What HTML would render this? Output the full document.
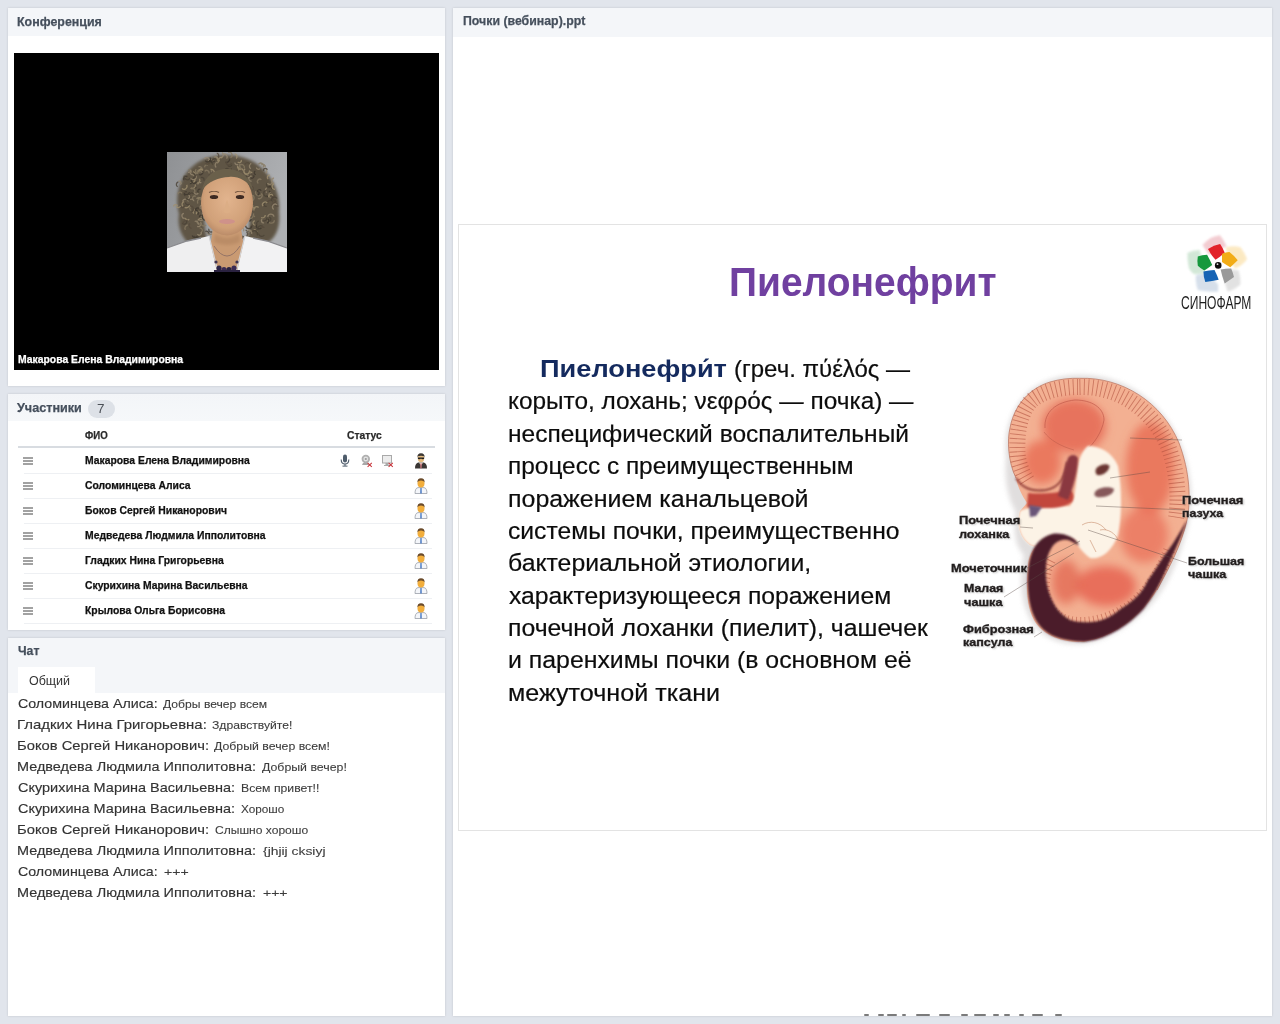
<!DOCTYPE html>
<html><head><meta charset="utf-8"><title>Вебинар</title>
<style>
html,body{margin:0;padding:0;width:1280px;height:1024px;overflow:hidden;background:#e1e5ec;font-family:"Liberation Sans", sans-serif;}
.tx{position:absolute;white-space:nowrap;font-family:"Liberation Sans", sans-serif;transform-origin:0 0;}
.panel{position:absolute;background:#fff;box-shadow:0 0 2px rgba(40,40,40,0.16);}
.ph{position:absolute;left:0;right:0;top:0;background:#f4f6f9;}
.row{position:absolute;left:16px;width:408px;height:1px;background:#eef0f3;}
.hb{position:absolute;left:23px;width:10px;height:2px;background:#a2a2a2;}
</style></head>
<body>
<!-- Conference panel -->
<div class="panel" style="left:8px;top:8px;width:437px;height:378px;">
  <div class="ph" style="height:28px;"></div>
  <div style="position:absolute;left:6px;top:45px;width:425px;height:317px;background:#000;"></div>
</div>
<!-- Participants panel -->
<div class="panel" style="left:8px;top:394px;width:437px;height:236px;">
  <div class="ph" style="height:27px;background:linear-gradient(#f3f5f8,#f6f8fa);"></div>
  <div style="position:absolute;left:80px;top:6px;width:27px;height:18px;border-radius:9px;background:#dde1e7;"></div>
  <div style="position:absolute;left:10px;top:52px;width:417px;height:2px;background:#d8dce1;"></div>
</div>
<!-- Chat panel -->
<div class="panel" style="left:8px;top:638px;width:437px;height:378px;">
  <div class="ph" style="height:55px;"></div>
  <div style="position:absolute;left:10px;top:29px;width:77px;height:26px;background:#fff;"></div>
</div>
<!-- Presentation panel -->
<div class="panel" style="left:453px;top:8px;width:819px;height:1008px;">
  <div class="ph" style="height:29px;"></div>
  <div style="position:absolute;left:5px;top:216px;width:807px;height:605px;border:1px solid #e3e3e3;background:#fff;"></div>
</div>
<div class='row' style='top:473px;left:24px;width:408px'></div><div class='hb' style='top:456.5px'></div><div class='hb' style='top:459.5px'></div><div class='hb' style='top:462.5px'></div><div class='row' style='top:498px;left:24px;width:408px'></div><div class='hb' style='top:481.5px'></div><div class='hb' style='top:484.5px'></div><div class='hb' style='top:487.5px'></div><div class='row' style='top:523px;left:24px;width:408px'></div><div class='hb' style='top:506.5px'></div><div class='hb' style='top:509.5px'></div><div class='hb' style='top:512.5px'></div><div class='row' style='top:548px;left:24px;width:408px'></div><div class='hb' style='top:531.5px'></div><div class='hb' style='top:534.5px'></div><div class='hb' style='top:537.5px'></div><div class='row' style='top:573px;left:24px;width:408px'></div><div class='hb' style='top:556.5px'></div><div class='hb' style='top:559.5px'></div><div class='hb' style='top:562.5px'></div><div class='row' style='top:598px;left:24px;width:408px'></div><div class='hb' style='top:581.5px'></div><div class='hb' style='top:584.5px'></div><div class='hb' style='top:587.5px'></div><div class='row' style='top:623px;left:24px;width:408px'></div><div class='hb' style='top:606.5px'></div><div class='hb' style='top:609.5px'></div><div class='hb' style='top:612.5px'></div>
<div style='position:absolute;left:864px;top:1014px;width:5.0px;height:2px;background:#5a5a5a;opacity:0.8;border-radius:1px'></div><div style='position:absolute;left:877.5px;top:1014px;width:6.5px;height:2px;background:#5a5a5a;opacity:0.8;border-radius:1px'></div><div style='position:absolute;left:887px;top:1014px;width:10.0px;height:2px;background:#5a5a5a;opacity:0.8;border-radius:1px'></div><div style='position:absolute;left:901.6px;top:1014px;width:4.4px;height:2px;background:#5a5a5a;opacity:0.8;border-radius:1px'></div><div style='position:absolute;left:915.6px;top:1014px;width:14.1px;height:2px;background:#5a5a5a;opacity:0.8;border-radius:1px'></div><div style='position:absolute;left:939px;top:1014px;width:10.6px;height:2px;background:#5a5a5a;opacity:0.8;border-radius:1px'></div><div style='position:absolute;left:961.4px;top:1014px;width:7.0px;height:2px;background:#5a5a5a;opacity:0.8;border-radius:1px'></div><div style='position:absolute;left:974px;top:1014px;width:12.0px;height:2px;background:#5a5a5a;opacity:0.8;border-radius:1px'></div><div style='position:absolute;left:992.8px;top:1014px;width:6.3px;height:2px;background:#5a5a5a;opacity:0.8;border-radius:1px'></div><div style='position:absolute;left:1004px;top:1014px;width:5.7px;height:2px;background:#5a5a5a;opacity:0.8;border-radius:1px'></div><div style='position:absolute;left:1018.8px;top:1014px;width:5.7px;height:2px;background:#5a5a5a;opacity:0.8;border-radius:1px'></div><div style='position:absolute;left:1031.5px;top:1014px;width:11.9px;height:2px;background:#5a5a5a;opacity:0.8;border-radius:1px'></div><div style='position:absolute;left:1055.4px;top:1014px;width:7.0px;height:2px;background:#5a5a5a;opacity:0.8;border-radius:1px'></div>
<!-- portrait -->
<svg style="position:absolute;left:167px;top:152px" width="120" height="120" viewBox="0 0 120 120">
  <defs>
    <linearGradient id="pbg" x1="0" y1="0" x2="1" y2="0.3"><stop offset="0" stop-color="#8f9194"/><stop offset="1" stop-color="#aeb0b3"/></linearGradient>
    <radialGradient id="pface" cx="0.5" cy="0.45" r="0.62"><stop offset="0" stop-color="#e2b48e"/><stop offset="0.7" stop-color="#d0a078"/><stop offset="1" stop-color="#ae8060"/></radialGradient>
    <filter id="pbl" x="-10%" y="-10%" width="120%" height="120%"><feGaussianBlur stdDeviation="1.6"/></filter>
    <filter id="pbl2" x="-10%" y="-10%" width="120%" height="120%"><feGaussianBlur stdDeviation="0.7"/></filter>
    <filter id="pbl3" x="-10%" y="-10%" width="120%" height="120%"><feGaussianBlur stdDeviation="0.45"/></filter>
  </defs>
  <rect width="120" height="120" fill="url(#pbg)"/>
  <g filter="url(#pbl)">
    <path d="M12 62 C6 40 16 14 40 6 C56 1 76 2 90 12 C106 24 114 42 112 60 C114 76 108 88 98 92 L78 92 C84 78 84 58 80 36 C70 24 50 24 40 36 C36 58 36 78 42 92 L22 92 C14 84 10 74 12 62Z" fill="#5e5444"/>
  </g>
  <g filter="url(#pbl2)" opacity="0.8"><path d="M103.7 44.5A2.5 2.5 0 0 1 108.2 45.0" stroke="#554a3c" stroke-width="1.3" fill="none"/><path d="M73.8 21.4A2.4 2.4 0 0 1 70.3 18.1" stroke="#554a3c" stroke-width="1.3" fill="none"/><path d="M70.7 16.5A1.8 1.8 0 0 1 73.7 15.4" stroke="#968870" stroke-width="1.3" fill="none"/><path d="M29.3 24.0A2.2 2.2 0 0 1 25.9 25.8" stroke="#3e372e" stroke-width="1.3" fill="none"/><path d="M97.0 70.8A2.2 2.2 0 0 1 95.1 67.0" stroke="#968870" stroke-width="1.3" fill="none"/><path d="M49.4 6.2A2.7 2.7 0 0 1 50.3 11.2" stroke="#a09070" stroke-width="1.3" fill="none"/><path d="M82.2 19.5A2.5 2.5 0 0 1 77.2 19.7" stroke="#a09070" stroke-width="1.3" fill="none"/><path d="M18.3 43.6A2.1 2.1 0 0 1 19.7 39.7" stroke="#3e372e" stroke-width="1.3" fill="none"/><path d="M55.0 0.6A2.7 2.7 0 0 1 53.7 5.6" stroke="#968870" stroke-width="1.3" fill="none"/><path d="M67.1 26.7A2.6 2.6 0 0 1 69.8 22.4" stroke="#3e372e" stroke-width="1.3" fill="none"/><path d="M94.3 13.1A2.3 2.3 0 0 1 98.2 15.1" stroke="#877a62" stroke-width="1.3" fill="none"/><path d="M35.6 18.8A2.8 2.8 0 0 1 31.9 22.5" stroke="#3e372e" stroke-width="1.3" fill="none"/><path d="M79.7 24.5A3.0 3.0 0 0 1 85.0 26.0" stroke="#877a62" stroke-width="1.3" fill="none"/><path d="M74.3 7.9A2.1 2.1 0 0 1 70.7 9.9" stroke="#a09070" stroke-width="1.3" fill="none"/><path d="M52.7 9.2A2.0 2.0 0 0 1 55.2 5.9" stroke="#a09070" stroke-width="1.3" fill="none"/><path d="M20.7 42.1A2.3 2.3 0 0 1 21.9 46.4" stroke="#554a3c" stroke-width="1.3" fill="none"/><path d="M107.4 68.3A3.1 3.1 0 0 1 101.2 67.9" stroke="#877a62" stroke-width="1.3" fill="none"/><path d="M37.8 15.4A1.9 1.9 0 0 1 40.9 13.4" stroke="#877a62" stroke-width="1.3" fill="none"/><path d="M83.9 16.8A3.1 3.1 0 0 1 84.3 11.3" stroke="#968870" stroke-width="1.3" fill="none"/><path d="M102.0 39.0A2.9 2.9 0 0 1 98.7 43.8" stroke="#3e372e" stroke-width="1.3" fill="none"/><path d="M17.3 28.3A2.4 2.4 0 0 1 20.3 24.6" stroke="#3e372e" stroke-width="1.3" fill="none"/><path d="M55.2 23.7A2.8 2.8 0 0 1 60.7 23.2" stroke="#3e372e" stroke-width="1.3" fill="none"/><path d="M101.3 35.3A2.0 2.0 0 0 1 104.7 37.3" stroke="#3e372e" stroke-width="1.3" fill="none"/><path d="M103.2 35.3A2.7 2.7 0 0 1 100.4 30.8" stroke="#4a4236" stroke-width="1.3" fill="none"/><path d="M100.0 40.5A2.6 2.6 0 0 1 99.8 35.8" stroke="#968870" stroke-width="1.3" fill="none"/><path d="M35.5 20.3A2.4 2.4 0 0 1 34.4 15.9" stroke="#877a62" stroke-width="1.3" fill="none"/><path d="M82.2 83.6A2.7 2.7 0 0 1 84.9 79.0" stroke="#877a62" stroke-width="1.3" fill="none"/><path d="M21.6 43.1A1.8 1.8 0 0 1 21.1 46.5" stroke="#968870" stroke-width="1.3" fill="none"/><path d="M15.9 54.3A2.7 2.7 0 0 1 17.1 49.7" stroke="#a09070" stroke-width="1.3" fill="none"/><path d="M30.9 68.5A2.9 2.9 0 0 1 35.5 67.0" stroke="#a09070" stroke-width="1.3" fill="none"/><path d="M83.4 21.6A2.4 2.4 0 0 1 80.7 25.3" stroke="#968870" stroke-width="1.3" fill="none"/><path d="M108.7 48.2A2.7 2.7 0 0 1 107.3 43.0" stroke="#554a3c" stroke-width="1.3" fill="none"/><path d="M31.5 40.5A1.9 1.9 0 0 1 33.5 37.3" stroke="#3e372e" stroke-width="1.3" fill="none"/><path d="M41.3 9.0A2.4 2.4 0 0 1 45.9 10.7" stroke="#968870" stroke-width="1.3" fill="none"/><path d="M31.9 84.1A2.4 2.4 0 0 1 27.2 83.7" stroke="#4a4236" stroke-width="1.3" fill="none"/><path d="M100.7 51.7A2.7 2.7 0 0 1 106.0 50.4" stroke="#554a3c" stroke-width="1.3" fill="none"/><path d="M61.1 27.1A2.8 2.8 0 0 1 65.3 30.8" stroke="#554a3c" stroke-width="1.3" fill="none"/><path d="M35.9 62.8A3.1 3.1 0 0 1 32.0 67.7" stroke="#968870" stroke-width="1.3" fill="none"/><path d="M111.4 53.8A2.6 2.6 0 0 1 109.1 49.1" stroke="#554a3c" stroke-width="1.3" fill="none"/><path d="M90.3 40.1A2.1 2.1 0 0 1 94.2 38.7" stroke="#3e372e" stroke-width="1.3" fill="none"/><path d="M65.0 12.6A2.4 2.4 0 0 1 60.7 13.4" stroke="#4a4236" stroke-width="1.3" fill="none"/><path d="M81.7 25.0A2.5 2.5 0 0 1 86.6 24.5" stroke="#554a3c" stroke-width="1.3" fill="none"/><path d="M30.7 21.6A2.5 2.5 0 0 1 34.6 18.5" stroke="#877a62" stroke-width="1.3" fill="none"/><path d="M99.7 54.3A2.1 2.1 0 0 1 98.3 50.3" stroke="#4a4236" stroke-width="1.3" fill="none"/><path d="M33.5 69.9A2.9 2.9 0 0 1 30.2 74.4" stroke="#968870" stroke-width="1.3" fill="none"/><path d="M33.6 71.5A2.2 2.2 0 0 1 30.3 68.7" stroke="#877a62" stroke-width="1.3" fill="none"/><path d="M22.4 40.2A2.8 2.8 0 0 1 17.5 41.7" stroke="#3e372e" stroke-width="1.3" fill="none"/><path d="M15.6 49.5A2.9 2.9 0 0 1 21.3 49.5" stroke="#968870" stroke-width="1.3" fill="none"/><path d="M55.9 2.4A2.9 2.9 0 0 1 59.6 6.7" stroke="#968870" stroke-width="1.3" fill="none"/><path d="M28.9 21.0A3.0 3.0 0 0 1 23.1 20.3" stroke="#968870" stroke-width="1.3" fill="none"/><path d="M22.1 67.1A1.9 1.9 0 0 1 18.6 65.8" stroke="#a09070" stroke-width="1.3" fill="none"/><path d="M97.0 16.6A2.4 2.4 0 0 1 98.5 21.1" stroke="#968870" stroke-width="1.3" fill="none"/><path d="M43.1 7.9A3.0 3.0 0 0 1 38.3 11.3" stroke="#554a3c" stroke-width="1.3" fill="none"/><path d="M84.0 76.8A2.9 2.9 0 0 1 89.2 74.3" stroke="#554a3c" stroke-width="1.3" fill="none"/><path d="M26.2 19.5A2.1 2.1 0 0 1 26.3 23.4" stroke="#a09070" stroke-width="1.3" fill="none"/><path d="M31.2 41.1A2.1 2.1 0 0 1 27.3 39.8" stroke="#968870" stroke-width="1.3" fill="none"/><path d="M84.9 74.1A3.2 3.2 0 0 1 78.6 73.6" stroke="#3e372e" stroke-width="1.3" fill="none"/><path d="M88.1 64.7A1.8 1.8 0 0 1 87.1 61.5" stroke="#877a62" stroke-width="1.3" fill="none"/><path d="M73.3 77.0A1.9 1.9 0 0 1 76.4 79.3" stroke="#968870" stroke-width="1.3" fill="none"/><path d="M96.0 54.1A2.6 2.6 0 0 1 100.3 51.1" stroke="#a09070" stroke-width="1.3" fill="none"/><path d="M36.3 66.1A2.6 2.6 0 0 1 37.4 61.1" stroke="#968870" stroke-width="1.3" fill="none"/><path d="M87.2 58.5A2.7 2.7 0 0 1 91.6 55.5" stroke="#a09070" stroke-width="1.3" fill="none"/><path d="M85.3 43.1A3.2 3.2 0 0 1 83.3 49.1" stroke="#877a62" stroke-width="1.3" fill="none"/><path d="M49.2 15.4A3.0 3.0 0 0 1 50.4 10.2" stroke="#968870" stroke-width="1.3" fill="none"/><path d="M34.7 54.4A2.4 2.4 0 0 1 34.6 59.1" stroke="#3e372e" stroke-width="1.3" fill="none"/><path d="M86.8 23.2A2.0 2.0 0 0 1 83.6 25.5" stroke="#3e372e" stroke-width="1.3" fill="none"/><path d="M34.8 56.6A2.8 2.8 0 0 1 38.3 60.5" stroke="#968870" stroke-width="1.3" fill="none"/><path d="M29.2 23.8A3.2 3.2 0 0 1 23.4 26.2" stroke="#968870" stroke-width="1.3" fill="none"/><path d="M32.5 26.7A2.9 2.9 0 0 1 29.6 31.0" stroke="#a09070" stroke-width="1.3" fill="none"/><path d="M94.2 41.5A3.0 3.0 0 0 1 90.9 46.4" stroke="#877a62" stroke-width="1.3" fill="none"/><path d="M32.6 76.2A2.3 2.3 0 0 1 34.3 80.4" stroke="#877a62" stroke-width="1.3" fill="none"/><path d="M86.8 78.0A2.1 2.1 0 0 1 89.5 81.1" stroke="#a09070" stroke-width="1.3" fill="none"/><path d="M82.6 31.4A2.9 2.9 0 0 1 77.3 31.0" stroke="#4a4236" stroke-width="1.3" fill="none"/><path d="M79.7 51.0A2.9 2.9 0 0 1 83.0 46.4" stroke="#877a62" stroke-width="1.3" fill="none"/><path d="M83.9 34.5A2.0 2.0 0 0 1 85.3 38.2" stroke="#554a3c" stroke-width="1.3" fill="none"/><path d="M103.7 45.9A2.9 2.9 0 0 1 103.8 40.4" stroke="#877a62" stroke-width="1.3" fill="none"/><path d="M101.1 27.1A2.3 2.3 0 0 1 103.0 23.1" stroke="#a09070" stroke-width="1.3" fill="none"/><path d="M90.2 72.9A2.3 2.3 0 0 1 92.0 69.1" stroke="#4a4236" stroke-width="1.3" fill="none"/><path d="M24.5 76.3A3.0 3.0 0 0 1 22.7 71.5" stroke="#554a3c" stroke-width="1.3" fill="none"/><path d="M24.1 28.3A1.8 1.8 0 0 1 22.9 31.6" stroke="#3e372e" stroke-width="1.3" fill="none"/><path d="M72.8 13.2A2.8 2.8 0 0 1 77.3 16.1" stroke="#877a62" stroke-width="1.3" fill="none"/><path d="M45.3 79.6A2.3 2.3 0 0 1 41.9 76.8" stroke="#4a4236" stroke-width="1.3" fill="none"/><path d="M79.5 79.7A2.9 2.9 0 0 1 75.9 84.3" stroke="#554a3c" stroke-width="1.3" fill="none"/><path d="M31.5 14.8A2.7 2.7 0 0 1 34.9 18.6" stroke="#877a62" stroke-width="1.3" fill="none"/><path d="M11.2 29.4A2.0 2.0 0 0 1 13.4 32.7" stroke="#968870" stroke-width="1.3" fill="none"/><path d="M37.8 19.4A2.3 2.3 0 0 1 41.9 21.4" stroke="#877a62" stroke-width="1.3" fill="none"/><path d="M31.2 21.3A2.2 2.2 0 0 1 29.3 17.4" stroke="#877a62" stroke-width="1.3" fill="none"/><path d="M104.8 54.0A3.0 3.0 0 0 1 110.2 52.1" stroke="#554a3c" stroke-width="1.3" fill="none"/><path d="M59.9 22.2A1.9 1.9 0 0 1 56.3 23.1" stroke="#877a62" stroke-width="1.3" fill="none"/><path d="M94.5 75.8A2.9 2.9 0 0 1 89.6 72.9" stroke="#3e372e" stroke-width="1.3" fill="none"/><path d="M101.9 45.3A2.1 2.1 0 0 1 105.9 43.8" stroke="#a09070" stroke-width="1.3" fill="none"/><path d="M91.4 12.4A2.8 2.8 0 0 1 96.1 15.5" stroke="#877a62" stroke-width="1.3" fill="none"/><path d="M97.3 83.0A3.0 3.0 0 0 1 91.8 82.1" stroke="#4a4236" stroke-width="1.3" fill="none"/><path d="M102.1 65.3A1.9 1.9 0 0 1 102.6 69.0" stroke="#4a4236" stroke-width="1.3" fill="none"/><path d="M93.8 42.9A3.1 3.1 0 0 1 89.0 39.1" stroke="#877a62" stroke-width="1.3" fill="none"/><path d="M42.7 40.1A2.6 2.6 0 0 1 37.6 40.3" stroke="#968870" stroke-width="1.3" fill="none"/><path d="M77.9 12.5A2.4 2.4 0 0 1 82.5 12.3" stroke="#554a3c" stroke-width="1.3" fill="none"/><path d="M84.5 48.1A2.2 2.2 0 0 1 81.3 45.1" stroke="#554a3c" stroke-width="1.3" fill="none"/><path d="M26.8 61.5A2.2 2.2 0 0 1 29.4 58.0" stroke="#a09070" stroke-width="1.3" fill="none"/><path d="M88.3 56.0A1.9 1.9 0 0 1 86.0 53.1" stroke="#a09070" stroke-width="1.3" fill="none"/><path d="M106.7 57.4A2.8 2.8 0 0 1 109.9 52.7" stroke="#968870" stroke-width="1.3" fill="none"/><path d="M74.3 16.8A2.7 2.7 0 0 1 70.6 13.6" stroke="#a09070" stroke-width="1.3" fill="none"/><path d="M71.2 12.2A2.1 2.1 0 0 1 67.9 10.4" stroke="#968870" stroke-width="1.3" fill="none"/><path d="M44.9 81.8A3.1 3.1 0 0 1 39.8 79.2" stroke="#877a62" stroke-width="1.3" fill="none"/><path d="M49.8 1.2A2.4 2.4 0 0 1 50.2 5.8" stroke="#554a3c" stroke-width="1.3" fill="none"/><path d="M32.1 20.5A2.2 2.2 0 0 1 36.0 18.4" stroke="#a09070" stroke-width="1.3" fill="none"/><path d="M92.6 81.8A2.7 2.7 0 0 1 89.9 77.2" stroke="#554a3c" stroke-width="1.3" fill="none"/><path d="M29.0 58.4A2.5 2.5 0 0 1 33.6 58.6" stroke="#554a3c" stroke-width="1.3" fill="none"/><path d="M67.7 1.8A2.7 2.7 0 0 1 69.1 6.5" stroke="#a09070" stroke-width="1.3" fill="none"/><path d="M79.3 35.3A3.1 3.1 0 0 1 82.2 30.0" stroke="#877a62" stroke-width="1.3" fill="none"/><path d="M69.6 26.7A3.1 3.1 0 0 1 63.5 26.5" stroke="#4a4236" stroke-width="1.3" fill="none"/><path d="M78.1 38.4A2.9 2.9 0 0 1 79.5 33.4" stroke="#4a4236" stroke-width="1.3" fill="none"/><path d="M85.4 79.6A3.1 3.1 0 0 1 90.2 83.4" stroke="#4a4236" stroke-width="1.3" fill="none"/><path d="M26.0 47.3A2.0 2.0 0 0 1 28.7 44.4" stroke="#877a62" stroke-width="1.3" fill="none"/><path d="M23.1 26.0A3.1 3.1 0 0 1 17.4 23.6" stroke="#4a4236" stroke-width="1.3" fill="none"/><path d="M19.7 32.9A3.1 3.1 0 0 1 14.9 36.6" stroke="#a09070" stroke-width="1.3" fill="none"/><path d="M42.9 5.5A2.8 2.8 0 0 1 38.3 8.7" stroke="#3e372e" stroke-width="1.3" fill="none"/><path d="M33.9 79.8A2.1 2.1 0 0 1 30.4 82.2" stroke="#968870" stroke-width="1.3" fill="none"/><path d="M61.1 25.8A2.2 2.2 0 0 1 63.2 22.3" stroke="#877a62" stroke-width="1.3" fill="none"/><path d="M100.1 44.5A2.9 2.9 0 0 1 99.2 38.7" stroke="#4a4236" stroke-width="1.3" fill="none"/><path d="M22.5 52.5A3.1 3.1 0 0 1 17.1 54.7" stroke="#a09070" stroke-width="1.3" fill="none"/><path d="M22.2 43.0A2.4 2.4 0 0 1 26.4 41.8" stroke="#4a4236" stroke-width="1.3" fill="none"/><path d="M105.3 29.9A2.5 2.5 0 0 1 100.5 30.9" stroke="#968870" stroke-width="1.3" fill="none"/><path d="M30.5 83.7A2.8 2.8 0 0 1 25.2 83.5" stroke="#3e372e" stroke-width="1.3" fill="none"/><path d="M81.6 57.2A2.5 2.5 0 0 1 82.1 52.2" stroke="#554a3c" stroke-width="1.3" fill="none"/><path d="M19.3 68.9A2.2 2.2 0 0 1 15.4 71.0" stroke="#4a4236" stroke-width="1.3" fill="none"/><path d="M91.4 39.5A2.0 2.0 0 0 1 90.6 43.0" stroke="#3e372e" stroke-width="1.3" fill="none"/><path d="M26.2 21.5A2.7 2.7 0 0 1 26.3 26.7" stroke="#4a4236" stroke-width="1.3" fill="none"/><path d="M71.7 22.5A2.2 2.2 0 0 1 67.8 24.7" stroke="#877a62" stroke-width="1.3" fill="none"/><path d="M68.6 20.4A3.2 3.2 0 0 1 64.4 16.4" stroke="#4a4236" stroke-width="1.3" fill="none"/><path d="M58.4 16.9A2.6 2.6 0 0 1 62.4 19.8" stroke="#4a4236" stroke-width="1.3" fill="none"/><path d="M99.7 65.6A2.5 2.5 0 0 1 96.3 68.6" stroke="#4a4236" stroke-width="1.3" fill="none"/><path d="M15.5 42.1A2.7 2.7 0 0 1 20.6 41.8" stroke="#554a3c" stroke-width="1.3" fill="none"/><path d="M29.6 47.0A2.1 2.1 0 0 1 33.6 48.3" stroke="#877a62" stroke-width="1.3" fill="none"/><path d="M82.3 61.4A1.9 1.9 0 0 1 85.6 59.7" stroke="#554a3c" stroke-width="1.3" fill="none"/><path d="M65.0 28.3A2.6 2.6 0 0 1 60.8 25.1" stroke="#a09070" stroke-width="1.3" fill="none"/><path d="M30.6 47.2A2.7 2.7 0 0 1 35.5 49.2" stroke="#a09070" stroke-width="1.3" fill="none"/><path d="M48.4 23.2A3.2 3.2 0 0 1 42.2 22.6" stroke="#4a4236" stroke-width="1.3" fill="none"/><path d="M24.4 45.5A2.8 2.8 0 0 1 19.1 46.2" stroke="#4a4236" stroke-width="1.3" fill="none"/><path d="M18.1 53.3A2.5 2.5 0 0 1 13.4 54.3" stroke="#554a3c" stroke-width="1.3" fill="none"/><path d="M88.4 73.1A2.1 2.1 0 0 1 87.9 68.9" stroke="#a09070" stroke-width="1.3" fill="none"/><path d="M23.1 53.8A3.2 3.2 0 0 1 24.3 60.0" stroke="#554a3c" stroke-width="1.3" fill="none"/><path d="M27.4 38.5A1.9 1.9 0 0 1 29.6 35.8" stroke="#4a4236" stroke-width="1.3" fill="none"/><path d="M71.3 18.4A2.5 2.5 0 0 1 76.1 18.5" stroke="#a09070" stroke-width="1.3" fill="none"/><path d="M45.9 29.5A1.8 1.8 0 0 1 43.5 27.1" stroke="#877a62" stroke-width="1.3" fill="none"/><path d="M84.6 29.1A2.3 2.3 0 0 1 82.7 25.0" stroke="#968870" stroke-width="1.3" fill="none"/><path d="M46.1 12.5A3.0 3.0 0 0 1 49.1 7.3" stroke="#4a4236" stroke-width="1.3" fill="none"/><path d="M39.6 61.4A2.5 2.5 0 0 1 37.0 57.3" stroke="#968870" stroke-width="1.3" fill="none"/><path d="M41.4 43.8A2.6 2.6 0 0 1 38.0 39.9" stroke="#877a62" stroke-width="1.3" fill="none"/><path d="M22.6 52.0A2.3 2.3 0 0 1 18.5 50.4" stroke="#4a4236" stroke-width="1.3" fill="none"/><path d="M38.8 68.0A3.1 3.1 0 0 1 37.4 62.0" stroke="#3e372e" stroke-width="1.3" fill="none"/><path d="M29.6 62.3A1.9 1.9 0 0 1 32.4 59.9" stroke="#a09070" stroke-width="1.3" fill="none"/><path d="M107.0 31.5A2.8 2.8 0 0 1 107.0 26.0" stroke="#968870" stroke-width="1.3" fill="none"/><path d="M56.6 29.0A3.0 3.0 0 0 1 59.6 23.8" stroke="#4a4236" stroke-width="1.3" fill="none"/><path d="M47.6 8.7A2.4 2.4 0 0 1 43.0 7.9" stroke="#3e372e" stroke-width="1.3" fill="none"/><path d="M85.5 85.7A1.9 1.9 0 0 1 81.9 86.0" stroke="#a09070" stroke-width="1.3" fill="none"/><path d="M32.3 65.2A2.1 2.1 0 0 1 36.2 64.1" stroke="#3e372e" stroke-width="1.3" fill="none"/><path d="M13.6 54.1A2.7 2.7 0 0 1 9.0 54.6" stroke="#a09070" stroke-width="1.3" fill="none"/><path d="M21.3 18.2A2.1 2.1 0 0 1 24.2 20.8" stroke="#877a62" stroke-width="1.3" fill="none"/><path d="M82.4 78.2A2.2 2.2 0 0 1 78.7 77.8" stroke="#4a4236" stroke-width="1.3" fill="none"/><path d="M82.5 63.7A3.1 3.1 0 0 1 82.4 69.4" stroke="#3e372e" stroke-width="1.3" fill="none"/><path d="M91.3 31.4A2.4 2.4 0 0 1 94.4 27.7" stroke="#877a62" stroke-width="1.3" fill="none"/><path d="M30.9 32.4A2.0 2.0 0 0 1 34.3 31.0" stroke="#968870" stroke-width="1.3" fill="none"/><path d="M38.4 79.5A2.5 2.5 0 0 1 42.0 81.9" stroke="#3e372e" stroke-width="1.3" fill="none"/><path d="M31.1 51.5A2.9 2.9 0 0 1 35.7 47.9" stroke="#877a62" stroke-width="1.3" fill="none"/><path d="M80.6 22.1A3.0 3.0 0 0 1 78.2 16.7" stroke="#a09070" stroke-width="1.3" fill="none"/><path d="M74.9 16.6A2.8 2.8 0 0 1 73.3 11.8" stroke="#877a62" stroke-width="1.3" fill="none"/><path d="M80.3 23.9A2.1 2.1 0 0 1 76.2 24.0" stroke="#4a4236" stroke-width="1.3" fill="none"/><path d="M33.9 25.6A2.2 2.2 0 0 1 36.8 28.6" stroke="#4a4236" stroke-width="1.3" fill="none"/><path d="M39.2 72.9A3.2 3.2 0 0 1 33.7 70.3" stroke="#877a62" stroke-width="1.3" fill="none"/><path d="M96.6 18.8A1.9 1.9 0 0 1 100.3 17.8" stroke="#4a4236" stroke-width="1.3" fill="none"/><path d="M23.6 17.7A1.9 1.9 0 0 1 21.1 20.2" stroke="#968870" stroke-width="1.3" fill="none"/><path d="M33.4 56.8A2.2 2.2 0 0 1 35.9 53.4" stroke="#968870" stroke-width="1.3" fill="none"/><path d="M47.2 27.1A1.9 1.9 0 0 1 44.1 25.2" stroke="#968870" stroke-width="1.3" fill="none"/><path d="M18.4 77.9A3.2 3.2 0 0 1 20.8 73.0" stroke="#877a62" stroke-width="1.3" fill="none"/><path d="M47.3 5.3A2.6 2.6 0 0 1 50.5 9.3" stroke="#a09070" stroke-width="1.3" fill="none"/><path d="M85.2 20.1A1.8 1.8 0 0 1 82.5 18.3" stroke="#a09070" stroke-width="1.3" fill="none"/><path d="M6.7 54.6A1.9 1.9 0 0 1 10.5 54.4" stroke="#a09070" stroke-width="1.3" fill="none"/><path d="M91.2 78.1A2.8 2.8 0 0 1 96.0 75.1" stroke="#4a4236" stroke-width="1.3" fill="none"/><path d="M104.6 48.9A3.0 3.0 0 0 1 110.0 46.5" stroke="#4a4236" stroke-width="1.3" fill="none"/><path d="M66.7 25.1A2.3 2.3 0 0 1 69.7 21.5" stroke="#3e372e" stroke-width="1.3" fill="none"/><path d="M37.5 6.8A2.7 2.7 0 0 1 42.4 7.9" stroke="#968870" stroke-width="1.3" fill="none"/><path d="M27.7 69.5A2.6 2.6 0 0 1 31.3 72.6" stroke="#968870" stroke-width="1.3" fill="none"/><path d="M44.8 20.2A1.8 1.8 0 0 1 46.0 17.3" stroke="#877a62" stroke-width="1.3" fill="none"/><path d="M97.5 75.2A1.8 1.8 0 0 1 94.9 73.5" stroke="#554a3c" stroke-width="1.3" fill="none"/><path d="M27.8 26.8A2.7 2.7 0 0 1 23.6 29.9" stroke="#a09070" stroke-width="1.3" fill="none"/><path d="M61.2 0.5A2.8 2.8 0 0 1 63.4 5.7" stroke="#877a62" stroke-width="1.3" fill="none"/><path d="M70.5 83.3A3.0 3.0 0 0 1 75.2 86.8" stroke="#4a4236" stroke-width="1.3" fill="none"/><path d="M16.5 72.5A2.8 2.8 0 0 1 21.1 69.4" stroke="#554a3c" stroke-width="1.3" fill="none"/><path d="M28.3 58.2A2.6 2.6 0 0 1 32.3 56.3" stroke="#3e372e" stroke-width="1.3" fill="none"/><path d="M10.7 34.8A2.6 2.6 0 0 1 11.3 30.0" stroke="#4a4236" stroke-width="1.3" fill="none"/><path d="M51.4 83.4A2.0 2.0 0 0 1 47.6 84.3" stroke="#877a62" stroke-width="1.3" fill="none"/><path d="M92.9 16.6A2.0 2.0 0 0 1 89.4 15.5" stroke="#968870" stroke-width="1.3" fill="none"/><path d="M100.7 66.9A2.2 2.2 0 0 1 100.1 71.0" stroke="#3e372e" stroke-width="1.3" fill="none"/><path d="M29.6 29.5A2.7 2.7 0 0 1 24.5 27.7" stroke="#3e372e" stroke-width="1.3" fill="none"/><path d="M62.6 6.7A3.0 3.0 0 0 1 58.6 10.1" stroke="#3e372e" stroke-width="1.3" fill="none"/><path d="M28.3 32.5A3.1 3.1 0 0 1 23.8 36.1" stroke="#a09070" stroke-width="1.3" fill="none"/><path d="M23.4 36.5A3.0 3.0 0 0 1 27.1 41.1" stroke="#877a62" stroke-width="1.3" fill="none"/><path d="M27.9 58.1A3.0 3.0 0 0 1 30.8 62.9" stroke="#3e372e" stroke-width="1.3" fill="none"/><path d="M79.9 78.8A3.1 3.1 0 0 1 84.7 82.0" stroke="#968870" stroke-width="1.3" fill="none"/><path d="M24.2 58.4A1.9 1.9 0 0 1 23.6 55.0" stroke="#877a62" stroke-width="1.3" fill="none"/><path d="M43.5 17.5A3.2 3.2 0 0 1 45.6 23.5" stroke="#a09070" stroke-width="1.3" fill="none"/><path d="M88.9 22.7A1.9 1.9 0 0 1 88.3 19.1" stroke="#3e372e" stroke-width="1.3" fill="none"/><path d="M108.0 37.3A2.8 2.8 0 0 1 106.9 31.9" stroke="#a09070" stroke-width="1.3" fill="none"/><path d="M76.8 25.6A2.5 2.5 0 0 1 74.2 21.5" stroke="#877a62" stroke-width="1.3" fill="none"/><path d="M10.9 42.2A2.2 2.2 0 0 1 15.1 41.4" stroke="#877a62" stroke-width="1.3" fill="none"/><path d="M69.7 85.7A2.3 2.3 0 0 1 68.4 81.8" stroke="#554a3c" stroke-width="1.3" fill="none"/><path d="M17.9 66.2A2.4 2.4 0 0 1 16.9 61.4" stroke="#968870" stroke-width="1.3" fill="none"/><path d="M85.9 63.5A2.3 2.3 0 0 1 81.9 65.5" stroke="#877a62" stroke-width="1.3" fill="none"/><path d="M23.0 47.5A2.5 2.5 0 0 1 26.9 49.3" stroke="#968870" stroke-width="1.3" fill="none"/><path d="M98.3 63.1A2.8 2.8 0 0 1 94.1 65.5" stroke="#a09070" stroke-width="1.3" fill="none"/><path d="M64.6 11.1A2.9 2.9 0 0 1 59.0 9.8" stroke="#554a3c" stroke-width="1.3" fill="none"/><path d="M100.7 64.9A3.2 3.2 0 0 1 107.0 64.7" stroke="#968870" stroke-width="1.3" fill="none"/></g>
  <!-- neck -->
  <path d="M46 76 L74 76 L80 118 L40 118Z" fill="#c99a72" filter="url(#pbl2)"/>
  <path d="M48 82 Q60 90 72 82 L73 90 Q60 96 47 90Z" fill="#a87c58" opacity="0.45" filter="url(#pbl)"/>
  <!-- face -->
  <ellipse cx="60" cy="51" rx="26" ry="32.5" fill="url(#pface)" filter="url(#pbl2)"/>
  <path d="M35 38 C38 22 50 16 62 17 C74 18 84 26 86 38 C80 28 70 24 62 25 C52 25 41 30 35 38Z" fill="#6b604c" filter="url(#pbl2)"/>
  <ellipse cx="47" cy="45" rx="4.2" ry="2.1" fill="#3e2a22" filter="url(#pbl3)"/>
  <ellipse cx="73" cy="45" rx="4.2" ry="2.1" fill="#3e2a22" filter="url(#pbl3)"/>
  <path d="M42 40.5 Q47 38 52 40.5" stroke="#7a5a44" stroke-width="1.2" fill="none" filter="url(#pbl3)"/>
  <path d="M68 40.5 Q73 38 78 40.5" stroke="#7a5a44" stroke-width="1.2" fill="none" filter="url(#pbl3)"/>
  <path d="M60 47 L56.5 60 Q60 62.5 63.5 60Z" fill="#dcae86" filter="url(#pbl2)"/>
  <ellipse cx="60" cy="69.5" rx="8" ry="2.6" fill="#cf928a" filter="url(#pbl2)"/>
  <!-- coat -->
  <path d="M0 96 L20 89 L42 84 L50 120 L0 120Z" fill="#efeff0"/>
  <path d="M120 96 L100 89 L78 84 L70 120 L120 120Z" fill="#f2f2f3"/>
  <path d="M0 96 L20 89 L34 86" stroke="#8a8a8e" stroke-width="1.3" fill="none" filter="url(#pbl3)"/>
  <path d="M120 96 L100 89 L86 86" stroke="#8a8a8e" stroke-width="1.3" fill="none" filter="url(#pbl3)"/>
  <path d="M42 84 L51 120 M78 84 L69 120" stroke="#d4d4d6" stroke-width="1.2"/>
  <g filter="url(#pbl3)">
    <circle cx="52" cy="116" r="2.6" fill="#2c2446"/><circle cx="57" cy="117.5" r="2.6" fill="#3a2c52"/><circle cx="62" cy="117.5" r="2.6" fill="#2a2240"/><circle cx="67" cy="116" r="2.6" fill="#3a2c52"/>
    <circle cx="49" cy="110" r="1.6" fill="#3c3050"/><circle cx="70" cy="110" r="1.6" fill="#3c3050"/>
    <rect x="47" y="118" width="26" height="2" fill="#2a2240"/>
  </g>
  <path d="M47 94 Q60 114 73 94" stroke="#5a4a5a" stroke-width="0.8" fill="none" filter="url(#pbl3)" opacity="0.6"/>
</svg>
<!-- status icons row 1 -->
<svg style="position:absolute;left:339px;top:453px" width="12" height="14" viewBox="0 0 12 14">
  <rect x="4" y="1.5" width="4" height="8" rx="2" fill="#4e5c6b"/>
  <path d="M2.2 6.5 Q2.2 11 6 11 Q9.8 11 9.8 6.5" stroke="#4e5c6b" stroke-width="1.1" fill="none"/>
  <rect x="5.5" y="11" width="1" height="2" fill="#4e5c6b"/>
  <rect x="3.5" y="12.6" width="5" height="1" fill="#4e5c6b"/>
</svg>
<svg style="position:absolute;left:360px;top:453px" width="14" height="15" viewBox="0 0 14 15">
  <circle cx="5.8" cy="6" r="4.2" fill="#b0b0b0"/>
  <circle cx="5.8" cy="6" r="2.4" fill="#e2e2e2"/>
  <circle cx="5.8" cy="6" r="1.1" fill="#999"/>
  <path d="M2 12 L9 12 L8 10 L3 10Z" fill="#a8a8a8"/>
  <path d="M7.6 9.8 L11.8 13.8 M11.8 9.8 L7.6 13.8" stroke="#c8343a" stroke-width="1.05"/>
</svg>
<svg style="position:absolute;left:381px;top:453px" width="14" height="15" viewBox="0 0 14 15">
  <rect x="1.5" y="2.5" width="9" height="7.5" fill="#ececec" stroke="#a9a9a9" stroke-width="1"/>
  <rect x="4.5" y="10" width="3" height="2" fill="#aaa"/>
  <rect x="3" y="12" width="6" height="1" fill="#aaa"/>
  <path d="M7.6 9.8 L11.8 13.8 M11.8 9.8 L7.6 13.8" stroke="#c8343a" stroke-width="1.05"/>
</svg>
<!-- admin user icon -->
<svg style="position:absolute;left:414px;top:452px" width="14" height="17" viewBox="0 0 14 17">
  <path d="M1 16.5 Q1 11.4 4.2 10.6 L9.8 10.6 Q13 11.4 13 16.5Z" fill="#3a3634"/>
  <path d="M4.6 10.6 L7 13 L9.4 10.6Z" fill="#d8d0c8"/>
  <path d="M6.2 11.4 L7.8 11.4 L7.5 16.5 L6.5 16.5Z" fill="#e0848c"/>
  <ellipse cx="7" cy="6.4" rx="3.2" ry="3.8" fill="#e6bc80"/>
  <path d="M3.4 5.8 Q3 1.2 7 1.2 Q11 1.2 10.6 5.8 L10 4.2 Q7 3.4 4 4.2Z" fill="#3c3834"/>
  <path d="M3.8 5.6 L10.2 5.6 L10 7 L8 7.2 L7 6.6 L6 7.2 L4 7 Z" fill="#1e1e1e"/>
</svg>
<svg style="position:absolute;left:414px;top:477px" width="14" height="17" viewBox="0 0 14 17">
  <path d="M1 16.5 Q1 11.2 4 10.6 L10 10.6 Q13 11.2 13 16.5Z" fill="#f4f6fa" stroke="#9aa0a8" stroke-width="0.8"/>
  <path d="M6.3 10.8 L7.7 10.8 L7.9 16.5 L6.1 16.5Z" fill="#5a86c8"/>
  <ellipse cx="7" cy="6.4" rx="3.5" ry="4" fill="#f2ae3c"/>
  <path d="M3.4 5.6 Q3.2 1.2 7 1.2 Q10.8 1.2 10.6 5.6 Q9.8 3.4 7 3.4 Q4.2 3.4 3.4 5.6Z" fill="#6a4a2a"/>
</svg>
<svg style="position:absolute;left:414px;top:502px" width="14" height="17" viewBox="0 0 14 17">
  <path d="M1 16.5 Q1 11.2 4 10.6 L10 10.6 Q13 11.2 13 16.5Z" fill="#f4f6fa" stroke="#9aa0a8" stroke-width="0.8"/>
  <path d="M6.3 10.8 L7.7 10.8 L7.9 16.5 L6.1 16.5Z" fill="#5a86c8"/>
  <ellipse cx="7" cy="6.4" rx="3.5" ry="4" fill="#f2ae3c"/>
  <path d="M3.4 5.6 Q3.2 1.2 7 1.2 Q10.8 1.2 10.6 5.6 Q9.8 3.4 7 3.4 Q4.2 3.4 3.4 5.6Z" fill="#6a4a2a"/>
</svg>
<svg style="position:absolute;left:414px;top:527px" width="14" height="17" viewBox="0 0 14 17">
  <path d="M1 16.5 Q1 11.2 4 10.6 L10 10.6 Q13 11.2 13 16.5Z" fill="#f4f6fa" stroke="#9aa0a8" stroke-width="0.8"/>
  <path d="M6.3 10.8 L7.7 10.8 L7.9 16.5 L6.1 16.5Z" fill="#5a86c8"/>
  <ellipse cx="7" cy="6.4" rx="3.5" ry="4" fill="#f2ae3c"/>
  <path d="M3.4 5.6 Q3.2 1.2 7 1.2 Q10.8 1.2 10.6 5.6 Q9.8 3.4 7 3.4 Q4.2 3.4 3.4 5.6Z" fill="#6a4a2a"/>
</svg>
<svg style="position:absolute;left:414px;top:552px" width="14" height="17" viewBox="0 0 14 17">
  <path d="M1 16.5 Q1 11.2 4 10.6 L10 10.6 Q13 11.2 13 16.5Z" fill="#f4f6fa" stroke="#9aa0a8" stroke-width="0.8"/>
  <path d="M6.3 10.8 L7.7 10.8 L7.9 16.5 L6.1 16.5Z" fill="#5a86c8"/>
  <ellipse cx="7" cy="6.4" rx="3.5" ry="4" fill="#f2ae3c"/>
  <path d="M3.4 5.6 Q3.2 1.2 7 1.2 Q10.8 1.2 10.6 5.6 Q9.8 3.4 7 3.4 Q4.2 3.4 3.4 5.6Z" fill="#6a4a2a"/>
</svg>
<svg style="position:absolute;left:414px;top:577px" width="14" height="17" viewBox="0 0 14 17">
  <path d="M1 16.5 Q1 11.2 4 10.6 L10 10.6 Q13 11.2 13 16.5Z" fill="#f4f6fa" stroke="#9aa0a8" stroke-width="0.8"/>
  <path d="M6.3 10.8 L7.7 10.8 L7.9 16.5 L6.1 16.5Z" fill="#5a86c8"/>
  <ellipse cx="7" cy="6.4" rx="3.5" ry="4" fill="#f2ae3c"/>
  <path d="M3.4 5.6 Q3.2 1.2 7 1.2 Q10.8 1.2 10.6 5.6 Q9.8 3.4 7 3.4 Q4.2 3.4 3.4 5.6Z" fill="#6a4a2a"/>
</svg>
<svg style="position:absolute;left:414px;top:602px" width="14" height="17" viewBox="0 0 14 17">
  <path d="M1 16.5 Q1 11.2 4 10.6 L10 10.6 Q13 11.2 13 16.5Z" fill="#f4f6fa" stroke="#9aa0a8" stroke-width="0.8"/>
  <path d="M6.3 10.8 L7.7 10.8 L7.9 16.5 L6.1 16.5Z" fill="#5a86c8"/>
  <ellipse cx="7" cy="6.4" rx="3.5" ry="4" fill="#f2ae3c"/>
  <path d="M3.4 5.6 Q3.2 1.2 7 1.2 Q10.8 1.2 10.6 5.6 Q9.8 3.4 7 3.4 Q4.2 3.4 3.4 5.6Z" fill="#6a4a2a"/>
</svg>
<!-- kidney -->
<svg style="position:absolute;left:940px;top:360px" width="320" height="300" viewBox="940 360 320 300">
  <defs>
    <filter id="kb1" x="-20%" y="-20%" width="140%" height="140%"><feGaussianBlur stdDeviation="0.9"/></filter>
    <filter id="kb2" x="-30%" y="-30%" width="160%" height="160%"><feGaussianBlur stdDeviation="2"/></filter>
    <filter id="kb3" x="-40%" y="-40%" width="180%" height="180%"><feGaussianBlur stdDeviation="5"/></filter>
    <filter id="khalo" x="-20%" y="-20%" width="140%" height="140%"><feGaussianBlur stdDeviation="2.5"/></filter>
  </defs>
  <!-- halo -->
  <path d="M1079,375 C1124,374 1164,402 1181,445 C1193,475 1193,505 1188,525 C1181,555 1170,580 1158,596 C1140,620 1110,640 1084,644 C1058,646 1036,636 1027,612 C1020,595 1020,575 1024,555 C1016,548 1012,530 1016,512 C1008,500 1004,480 1006,458 C1004,430 1010,410 1030,390 C1045,380 1060,375 1079,375Z" fill="#d9d6d6" filter="url(#khalo)" opacity="0.8"/>
  <!-- outer silhouette (cortex) -->
  <path d="M1079.7,378.3 C1122,377 1162,402 1179,443 C1190,472 1191,500 1187,520 C1181,546 1170,566 1157,590 C1140,618 1110,638 1084,641.7 C1060,643 1042,634 1034,620 C1026,605 1026,585 1028,565 C1029,556 1032,550 1036,547 L1030,545 C1020,538 1016,525 1020,511 L1027,503 C1022,495 1018,488 1016,478 C1008,462 1007,440 1010,428 C1014,405 1030,388 1050,382 C1060,379 1070,378 1079.7,378.3Z" fill="#f3b092"/>
  <path d="M1079.7,378.3 C1122,377 1162,402 1179,443 C1190,472 1191,500 1187,520 C1181,546 1170,566 1157,590" fill="none" stroke="#b8705c" stroke-width="1" opacity="0.7"/>
  <path d="M1016,478 C1008,462 1007,440 1010,428 C1014,405 1030,388 1050,382 C1060,379 1070,378 1079.7,378.3" fill="none" stroke="#b8705c" stroke-width="1" opacity="0.7"/>
  <!-- medulla (pink-red) -->
  <g filter="url(#kb3)">
    <ellipse cx="1074" cy="426" rx="32" ry="27" fill="#e5644f" opacity="0.8"/>
    <ellipse cx="1042" cy="462" rx="19" ry="22" fill="#e86a52" opacity="0.8"/>
    <ellipse cx="1150" cy="468" rx="24" ry="46" fill="#e86a52" opacity="0.8"/>
    <ellipse cx="1144" cy="535" rx="24" ry="28" fill="#ea7058" opacity="0.75"/>
    <ellipse cx="1106" cy="586" rx="30" ry="20" fill="#e65e4c" opacity="0.8"/>
    <ellipse cx="1066" cy="582" rx="14" ry="22" fill="#e2664f" opacity="0.75"/>
  </g>
  <!-- cortex stripes -->
  <path d="M1079.5,387 C1117,386 1152,408 1168,446 C1178,472 1179,500 1176,518" fill="none" stroke="#b0503e" stroke-width="16" stroke-dasharray="0.9 3.4" opacity="0.6"/>
  <path d="M1078,387 C1060,387 1040,392 1030,402 C1018,416 1016,440 1018,458 C1020,468 1024,476 1028,482" fill="none" stroke="#b0503e" stroke-width="16" stroke-dasharray="0.9 3.4" opacity="0.6"/>
  <path d="M1050,560 C1040,580 1042,605 1058,617 C1075,628 1105,624 1132,605 C1150,590 1162,570 1170,548" fill="none" stroke="#b0503e" stroke-width="12" stroke-dasharray="0.9 3.6" opacity="0.55"/>
  <!-- top lobe inner boundaries -->
  <path d="M1016,478 C1022,488 1032,492 1046,490 C1058,488 1066,478 1067,462" fill="none" stroke="#8e3a36" stroke-width="2" filter="url(#kb1)"/>
  <path d="M1045,428 C1044,412 1056,402 1075,400 C1092,400 1104,408 1104,420 C1102,432 1094,444 1086,450" fill="none" stroke="#c25a4a" stroke-width="1" opacity="0.7"/>
  <path d="M1044,432 C1050,440 1060,446 1074,450" fill="none" stroke="#b85848" stroke-width="0.8" opacity="0.6"/>
  <!-- cream sinus -->
  <path d="M1088,446 C1100,446 1112,452 1118,466 C1122,490 1122,515 1118,535 C1112,552 1100,560 1090,558 C1082,552 1078,546 1076,541 C1066,534 1050,538 1036,547 L1030,545 C1020,538 1016,525 1020,511 C1030,506 1050,506 1070,506 C1076,496 1076,480 1078,466 C1080,456 1083,450 1088,446Z" fill="#fcf3e6" filter="url(#kb1)"/>
  <!-- sinus details -->
  <path d="M1082,525 C1090,520 1100,522 1106,530 M1090,540 L1096,552 M1100,530 C1108,528 1116,534 1118,540" stroke="#c89070" stroke-width="1" fill="none" opacity="0.6"/>
  <!-- vessels -->
  <path d="M1028,493 C1040,494 1055,494 1066,490 C1072,488 1076,496 1072,502 C1066,506 1058,508 1048,508 C1040,508 1032,508 1027,507Z" fill="#c2463e" filter="url(#kb1)"/>
  <path d="M1058,496 C1062,482 1064,468 1068,458 C1070,454 1076,454 1078,458 C1078,470 1074,486 1068,500Z" fill="#8a3840" filter="url(#kb1)"/>
  <path d="M1029,505 L1042,507 L1036,516 L1030,517Z" fill="#6a5478" filter="url(#kb1)"/>
  <!-- calyx spots -->
  <path d="M1096.5,468 C1100,464 1108,463 1109.5,466 C1109,472 1102,476 1097,475 C1095,473 1095,470 1096.5,468Z" fill="#6b3630" filter="url(#kb1)"/>
  <path d="M1095,492 C1098,487 1110,486 1114,489 C1114,495 1104,498 1097,497 C1094,496 1094,494 1095,492Z" fill="#86585a" filter="url(#kb1)"/>
  <!-- dark capsule crescent -->
  <path d="M1079,545 C1076,538 1066,533 1054.5,533.4 C1045,535 1038,541 1034,548 C1028,560 1027,575 1028,590 C1029,605 1033,618 1040,626 C1048,636 1062,641 1084,641.7 C1104,640 1126,628 1143.6,609 C1153,597 1160,584 1166,570 C1174,552 1182,536 1187,520 C1180,532 1172,546 1164,556 C1157,567 1152,575 1148,580 C1142,594 1132,602 1122,608 C1112,616 1104,621 1092,622 C1082,622.5 1076,622 1070,620 C1060,614 1056,608 1053,602 C1048,592 1045,580 1046,568 C1046,560 1048,553 1052,547 C1056,541 1062,539 1068,540 C1074,542 1077,545 1079,545Z" fill="#4c1e2a" filter="url(#kb1)"/>
  <!-- label lines -->
  <g stroke="#5a4a46" stroke-width="0.7" opacity="0.6" fill="none">
    <line x1="1020" y1="527" x2="1033" y2="528"/>
    <line x1="1027" y1="568" x2="1080" y2="541"/>
    <line x1="1004" y1="597" x2="1074" y2="553"/>
    <line x1="1034" y1="637" x2="1042" y2="632"/>
    <line x1="1185" y1="510" x2="1096" y2="506"/>
    <line x1="1187" y1="563" x2="1088" y2="530"/>
    <line x1="1130" y1="438" x2="1182" y2="440"/>
    <line x1="1110" y1="478" x2="1150" y2="472"/>
  </g>
</svg>
<!-- logo -->
<svg style="position:absolute;left:1178px;top:226px" width="74" height="70" viewBox="1178 226 74 70">
  <defs><filter id="lgb" x="-20%" y="-20%" width="140%" height="140%"><feGaussianBlur stdDeviation="0.45"/></filter>
  <filter id="lgb2" x="-30%" y="-30%" width="160%" height="160%"><feGaussianBlur stdDeviation="1.1"/></filter></defs>
  <g filter="url(#lgb2)" opacity="0.8">
    <path d="M1202.5,245 Q1210,236 1220,235.2 Q1224,240 1226.6,246.3 L1209,254.7Z" fill="#f0c0c6"/>
    <path d="M1225.7,247.3 Q1234,245 1240.5,247.3 Q1245,253 1247,259.3 Q1242,266 1235,268.6 L1228,258Z" fill="#fbe4b4"/>
    <path d="M1225.7,268.6 L1238.6,270.5 Q1241,277 1240.5,284.4 Q1234,290 1227.5,291.8 L1224,280Z" fill="#dcdcdc"/>
    <path d="M1196,275.1 L1207.1,273.2 L1218.2,284.4 L1218.2,291.8 Q1206,292 1197.8,290 Q1195,282 1196,275.1Z" fill="#ccd8e6"/>
    <path d="M1187.6,252.8 Q1193,250 1199.7,250 L1205.3,273.2 L1194.1,274.2 Q1189,270 1188.6,266.7 Q1187,259 1187.6,252.8Z" fill="#c8e2ce"/>
  </g>
  <g filter="url(#lgb)">
    <path d="M1208,249.1 Q1214,245 1220.1,244 Q1223,248 1224.7,252.8 Q1220,257 1215.5,259.8 Q1211,255 1208,249.1Z" fill="#e2202a"/>
    <path d="M1222,253.8 Q1226,252 1229.4,251.9 Q1234,255.5 1237.7,260.3 Q1234,264 1230.3,267.2 Q1226,265 1222,262.1Z" fill="#f2ac14"/>
    <path d="M1197.8,256.5 Q1202,255 1207.1,254.7 Q1210,260 1212.2,264.9 Q1208,268 1204.3,270.5 Q1200,268 1197.8,265.8 Q1197,261 1197.8,256.5Z" fill="#13983c"/>
    <path d="M1203.4,271.4 Q1209,270.5 1214.5,270 Q1217,275 1218.7,279.7 Q1212,281 1205.3,282 Q1203.5,277 1203.4,271.4Z" fill="#1464b4"/>
    <path d="M1220.6,269.5 Q1226,268.8 1231.2,268.6 Q1233,273 1234,277 Q1229,280.5 1224.7,283.4 Q1222,276 1220.6,269.5Z" fill="#9a9a9a"/>
    <circle cx="1218.2" cy="265.4" r="3.3" fill="#111"/>
    <circle cx="1217.5" cy="264.2" r="0.9" fill="#ddd"/>
  </g>
</svg>

<div class='tx' style='left:17.40px;top:14.57px;font-size:13.5px;line-height:13.5px;font-weight:700;color:#454f5c;transform:scaleX(0.9202);-webkit-text-stroke:0.25px #454f5c;'>Конференция</div>
<div class='tx' style='left:462.90px;top:14.47px;font-size:13.5px;line-height:13.5px;font-weight:700;color:#454f5c;transform:scaleX(0.9131);-webkit-text-stroke:0.25px #454f5c;'>Почки (вебинар).ppt</div>
<div class='tx' style='left:17.40px;top:401.17px;font-size:13.5px;line-height:13.5px;font-weight:700;color:#454f5c;transform:scaleX(0.9352);-webkit-text-stroke:0.25px #454f5c;'>Участники</div>
<div class='tx' style='left:97.20px;top:401.97px;font-size:13.5px;line-height:13.5px;font-weight:400;color:#4a4f56;transform:scaleX(1.0010);'>7</div>
<div class='tx' style='left:17.80px;top:644.47px;font-size:13.5px;line-height:13.5px;font-weight:700;color:#454f5c;transform:scaleX(0.9086);-webkit-text-stroke:0.25px #454f5c;'>Чат</div>
<div class='tx' style='left:17.50px;top:353.71px;font-size:10.5px;line-height:10.5px;font-weight:700;color:#fff;transform:scaleX(0.9884);-webkit-text-stroke:0.25px #fff;'>Макарова Елена Владимировна</div>
<div class='tx' style='left:85.30px;top:429.81px;font-size:10.5px;line-height:10.5px;font-weight:700;color:#2a2a2a;transform:scaleX(0.9180);-webkit-text-stroke:0.25px #2a2a2a;'>ФИО</div>
<div class='tx' style='left:347.00px;top:429.81px;font-size:10.5px;line-height:10.5px;font-weight:700;color:#2a2a2a;transform:scaleX(0.9846);-webkit-text-stroke:0.25px #2a2a2a;'>Статус</div>
<div class='tx' style='left:85.30px;top:454.81px;font-size:10.5px;line-height:10.5px;font-weight:700;color:#111;transform:scaleX(0.9866);-webkit-text-stroke:0.25px #111;'>Макарова Елена Владимировна</div>
<div class='tx' style='left:85.30px;top:479.81px;font-size:10.5px;line-height:10.5px;font-weight:700;color:#111;transform:scaleX(0.9866);-webkit-text-stroke:0.25px #111;'>Соломинцева Алиса</div>
<div class='tx' style='left:85.30px;top:504.81px;font-size:10.5px;line-height:10.5px;font-weight:700;color:#111;transform:scaleX(0.9866);-webkit-text-stroke:0.25px #111;'>Боков Сергей Никанорович</div>
<div class='tx' style='left:85.30px;top:529.81px;font-size:10.5px;line-height:10.5px;font-weight:700;color:#111;transform:scaleX(0.9866);-webkit-text-stroke:0.25px #111;'>Медведева Людмила Ипполитовна</div>
<div class='tx' style='left:85.30px;top:554.81px;font-size:10.5px;line-height:10.5px;font-weight:700;color:#111;transform:scaleX(0.9866);-webkit-text-stroke:0.25px #111;'>Гладких Нина Григорьевна</div>
<div class='tx' style='left:85.30px;top:579.81px;font-size:10.5px;line-height:10.5px;font-weight:700;color:#111;transform:scaleX(0.9866);-webkit-text-stroke:0.25px #111;'>Скурихина Марина Васильевна</div>
<div class='tx' style='left:85.30px;top:604.81px;font-size:10.5px;line-height:10.5px;font-weight:700;color:#111;transform:scaleX(0.9866);-webkit-text-stroke:0.25px #111;'>Крылова Ольга Борисовна</div>
<div class='tx' style='left:28.50px;top:673.80px;font-size:13px;line-height:13px;font-weight:400;color:#333;transform:scaleX(0.9597);'>Общий</div>
<div class='tx' style='left:729.05px;top:261.64px;font-size:40px;line-height:40px;font-weight:700;color:#7040a0;transform:scaleX(0.9731);'>Пиелонефрит</div>
<div class='tx' style='left:507.70px;top:389.46px;font-size:24.5px;line-height:24.5px;font-weight:400;color:#0c0c0c;transform:scaleX(0.9951);-webkit-text-stroke:0.2px #0c0c0c;'>корыто, лохань; νεφρός — почка) —</div>
<div class='tx' style='left:507.70px;top:421.81px;font-size:24.5px;line-height:24.5px;font-weight:400;color:#0c0c0c;transform:scaleX(1.0011);-webkit-text-stroke:0.2px #0c0c0c;'>неспецифический воспалительный</div>
<div class='tx' style='left:507.70px;top:454.16px;font-size:24.5px;line-height:24.5px;font-weight:400;color:#0c0c0c;transform:scaleX(0.9969);-webkit-text-stroke:0.2px #0c0c0c;'>процесс с преимущественным</div>
<div class='tx' style='left:507.68px;top:486.51px;font-size:24.5px;line-height:24.5px;font-weight:400;color:#0c0c0c;transform:scaleX(1.0181);-webkit-text-stroke:0.2px #0c0c0c;'>поражением канальцевой</div>
<div class='tx' style='left:507.69px;top:518.86px;font-size:24.5px;line-height:24.5px;font-weight:400;color:#0c0c0c;transform:scaleX(1.0071);-webkit-text-stroke:0.2px #0c0c0c;'>системы почки, преимущественно</div>
<div class='tx' style='left:507.69px;top:551.21px;font-size:24.5px;line-height:24.5px;font-weight:400;color:#0c0c0c;transform:scaleX(1.0119);-webkit-text-stroke:0.2px #0c0c0c;'>бактериальной этиологии,</div>
<div class='tx' style='left:508.70px;top:583.56px;font-size:24.5px;line-height:24.5px;font-weight:400;color:#0c0c0c;transform:scaleX(1.0093);-webkit-text-stroke:0.2px #0c0c0c;'>характеризующееся поражением</div>
<div class='tx' style='left:507.69px;top:615.91px;font-size:24.5px;line-height:24.5px;font-weight:400;color:#0c0c0c;transform:scaleX(1.0105);-webkit-text-stroke:0.2px #0c0c0c;'>почечной лоханки (пиелит), чашечек</div>
<div class='tx' style='left:507.69px;top:648.26px;font-size:24.5px;line-height:24.5px;font-weight:400;color:#0c0c0c;transform:scaleX(1.0145);-webkit-text-stroke:0.2px #0c0c0c;'>и паренхимы почки (в основном её</div>
<div class='tx' style='left:507.67px;top:680.61px;font-size:24.5px;line-height:24.5px;font-weight:400;color:#0c0c0c;transform:scaleX(1.0250);-webkit-text-stroke:0.2px #0c0c0c;'>межуточной ткани</div>
<div class='tx' style='left:540.09px;top:356.66px;font-size:24.5px;line-height:24.5px;font-weight:700;color:#142a5e;transform:scaleX(1.1100);'>Пиелонефри́т</div>
<div class='tx' style='left:734.22px;top:356.96px;font-size:24.5px;line-height:24.5px;font-weight:400;color:#0c0c0c;transform:scaleX(0.9796);-webkit-text-stroke:0.2px #0c0c0c;'>(греч. πύέλός —</div>
<div class='tx' style='left:1181.00px;top:295.19px;font-size:17.5px;line-height:17.5px;font-weight:400;color:#1e1e1e;transform:scaleX(0.6894);'>СИНОФАРМ</div>
<div class='tx' style='left:958.90px;top:515.49px;font-size:11px;line-height:11px;font-weight:700;color:#221e1e;transform:scaleX(1.1753);-webkit-text-stroke:0.35px #221e1e;text-shadow:0 0 2px rgba(255,255,255,0.9),1px 1px 2px rgba(0,0,0,0.3);'>Почечная</div>
<div class='tx' style='left:958.90px;top:528.69px;font-size:11px;line-height:11px;font-weight:700;color:#221e1e;transform:scaleX(1.1483);-webkit-text-stroke:0.35px #221e1e;text-shadow:0 0 2px rgba(255,255,255,0.9),1px 1px 2px rgba(0,0,0,0.3);'>лоханка</div>
<div class='tx' style='left:950.60px;top:562.99px;font-size:11px;line-height:11px;font-weight:700;color:#221e1e;transform:scaleX(1.1674);-webkit-text-stroke:0.35px #221e1e;text-shadow:0 0 2px rgba(255,255,255,0.9),1px 1px 2px rgba(0,0,0,0.3);'>Мочеточник</div>
<div class='tx' style='left:964.00px;top:583.49px;font-size:11px;line-height:11px;font-weight:700;color:#221e1e;transform:scaleX(1.1240);-webkit-text-stroke:0.35px #221e1e;text-shadow:0 0 2px rgba(255,255,255,0.9),1px 1px 2px rgba(0,0,0,0.3);'>Малая</div>
<div class='tx' style='left:964.00px;top:596.69px;font-size:11px;line-height:11px;font-weight:700;color:#221e1e;transform:scaleX(1.1586);-webkit-text-stroke:0.35px #221e1e;text-shadow:0 0 2px rgba(255,255,255,0.9),1px 1px 2px rgba(0,0,0,0.3);'>чашка</div>
<div class='tx' style='left:963.30px;top:623.69px;font-size:11px;line-height:11px;font-weight:700;color:#221e1e;transform:scaleX(1.1626);-webkit-text-stroke:0.35px #221e1e;text-shadow:0 0 2px rgba(255,255,255,0.9),1px 1px 2px rgba(0,0,0,0.3);'>Фиброзная</div>
<div class='tx' style='left:963.30px;top:636.99px;font-size:11px;line-height:11px;font-weight:700;color:#221e1e;transform:scaleX(1.1388);-webkit-text-stroke:0.35px #221e1e;text-shadow:0 0 2px rgba(255,255,255,0.9),1px 1px 2px rgba(0,0,0,0.3);'>капсула</div>
<div class='tx' style='left:1182.30px;top:494.69px;font-size:11px;line-height:11px;font-weight:700;color:#221e1e;transform:scaleX(1.1773);-webkit-text-stroke:0.35px #221e1e;text-shadow:0 0 2px rgba(255,255,255,0.9),1px 1px 2px rgba(0,0,0,0.3);'>Почечная</div>
<div class='tx' style='left:1182.30px;top:508.19px;font-size:11px;line-height:11px;font-weight:700;color:#221e1e;transform:scaleX(1.1266);-webkit-text-stroke:0.35px #221e1e;text-shadow:0 0 2px rgba(255,255,255,0.9),1px 1px 2px rgba(0,0,0,0.3);'>пазуха</div>
<div class='tx' style='left:1188.10px;top:555.69px;font-size:11px;line-height:11px;font-weight:700;color:#221e1e;transform:scaleX(1.1278);-webkit-text-stroke:0.35px #221e1e;text-shadow:0 0 2px rgba(255,255,255,0.9),1px 1px 2px rgba(0,0,0,0.3);'>Большая</div>
<div class='tx' style='left:1188.10px;top:568.59px;font-size:11px;line-height:11px;font-weight:700;color:#221e1e;transform:scaleX(1.1499);-webkit-text-stroke:0.35px #221e1e;text-shadow:0 0 2px rgba(255,255,255,0.9),1px 1px 2px rgba(0,0,0,0.3);'>чашка</div>
<div class='tx' style='left:18.30px;top:696.87px;font-size:13.5px;line-height:13.5px;font-weight:400;color:#333;transform:scaleX(1.0537);-webkit-text-stroke:0.15px #333;'>Соломинцева Алиса:</div>
<div class='tx' style='left:163.20px;top:699.07px;font-size:11.5px;line-height:11.5px;font-weight:400;color:#3c3c3c;transform:scaleX(1.0551);-webkit-text-stroke:0.1px #3c3c3c;'>Добры вечер всем</div>
<div class='tx' style='left:17.19px;top:717.87px;font-size:13.5px;line-height:13.5px;font-weight:400;color:#333;transform:scaleX(1.1073);-webkit-text-stroke:0.15px #333;'>Гладких Нина Григорьевна:</div>
<div class='tx' style='left:211.80px;top:720.07px;font-size:11.5px;line-height:11.5px;font-weight:400;color:#3c3c3c;transform:scaleX(1.0551);-webkit-text-stroke:0.1px #3c3c3c;'>Здравствуйте!</div>
<div class='tx' style='left:17.21px;top:738.87px;font-size:13.5px;line-height:13.5px;font-weight:400;color:#333;transform:scaleX(1.0939);-webkit-text-stroke:0.15px #333;'>Боков Сергей Никанорович:</div>
<div class='tx' style='left:214.20px;top:741.07px;font-size:11.5px;line-height:11.5px;font-weight:400;color:#3c3c3c;transform:scaleX(1.0695);-webkit-text-stroke:0.1px #3c3c3c;'>Добрый вечер всем!</div>
<div class='tx' style='left:17.23px;top:759.87px;font-size:13.5px;line-height:13.5px;font-weight:400;color:#333;transform:scaleX(1.0707);-webkit-text-stroke:0.15px #333;'>Медведева Людмила Ипполитовна:</div>
<div class='tx' style='left:261.60px;top:762.07px;font-size:11.5px;line-height:11.5px;font-weight:400;color:#3c3c3c;transform:scaleX(1.0715);-webkit-text-stroke:0.1px #3c3c3c;'>Добрый вечер!</div>
<div class='tx' style='left:18.30px;top:780.87px;font-size:13.5px;line-height:13.5px;font-weight:400;color:#333;transform:scaleX(1.0730);-webkit-text-stroke:0.15px #333;'>Скурихина Марина Васильевна:</div>
<div class='tx' style='left:241.40px;top:783.07px;font-size:11.5px;line-height:11.5px;font-weight:400;color:#3c3c3c;transform:scaleX(1.0637);-webkit-text-stroke:0.1px #3c3c3c;'>Всем привет!!</div>
<div class='tx' style='left:18.30px;top:801.87px;font-size:13.5px;line-height:13.5px;font-weight:400;color:#333;transform:scaleX(1.0730);-webkit-text-stroke:0.15px #333;'>Скурихина Марина Васильевна:</div>
<div class='tx' style='left:241.40px;top:804.07px;font-size:11.5px;line-height:11.5px;font-weight:400;color:#3c3c3c;transform:scaleX(1.0225);-webkit-text-stroke:0.1px #3c3c3c;'>Хорошо</div>
<div class='tx' style='left:17.21px;top:822.87px;font-size:13.5px;line-height:13.5px;font-weight:400;color:#333;transform:scaleX(1.0939);-webkit-text-stroke:0.15px #333;'>Боков Сергей Никанорович:</div>
<div class='tx' style='left:214.70px;top:825.07px;font-size:11.5px;line-height:11.5px;font-weight:400;color:#3c3c3c;transform:scaleX(1.0488);-webkit-text-stroke:0.1px #3c3c3c;'>Слышно хорошо</div>
<div class='tx' style='left:17.23px;top:843.87px;font-size:13.5px;line-height:13.5px;font-weight:400;color:#333;transform:scaleX(1.0707);-webkit-text-stroke:0.15px #333;'>Медведева Людмила Ипполитовна:</div>
<div class='tx' style='left:262.90px;top:846.07px;font-size:11.5px;line-height:11.5px;font-weight:400;color:#3c3c3c;transform:scaleX(1.2069);-webkit-text-stroke:0.1px #3c3c3c;'>{jhjij cksiyj</div>
<div class='tx' style='left:18.30px;top:864.87px;font-size:13.5px;line-height:13.5px;font-weight:400;color:#333;transform:scaleX(1.0537);-webkit-text-stroke:0.15px #333;'>Соломинцева Алиса:</div>
<div class='tx' style='left:164.00px;top:867.07px;font-size:11.5px;line-height:11.5px;font-weight:400;color:#3c3c3c;transform:scaleX(1.2236);-webkit-text-stroke:0.1px #3c3c3c;'>+++</div>
<div class='tx' style='left:17.23px;top:885.87px;font-size:13.5px;line-height:13.5px;font-weight:400;color:#333;transform:scaleX(1.0707);-webkit-text-stroke:0.15px #333;'>Медведева Людмила Ипполитовна:</div>
<div class='tx' style='left:262.90px;top:888.07px;font-size:11.5px;line-height:11.5px;font-weight:400;color:#3c3c3c;transform:scaleX(1.2187);-webkit-text-stroke:0.1px #3c3c3c;'>+++</div>
</body></html>
